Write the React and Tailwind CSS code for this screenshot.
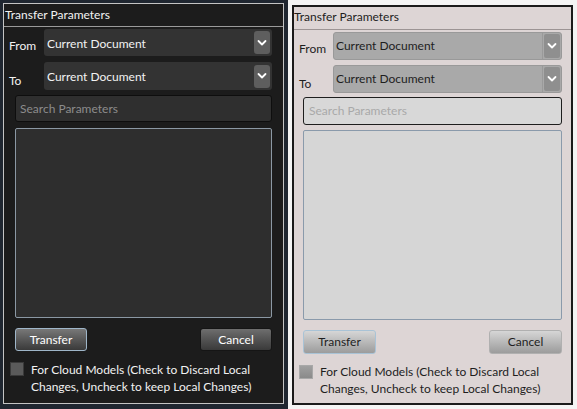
import React from 'react';

const Chevron = ({ className }) => (
  <svg viewBox="0 0 10 8" className={className} fill="none" stroke="currentColor" strokeWidth={1.8}>
    <path d="M1.5 2l3.5 3.5L8.5 2" strokeLinecap="round" strokeLinejoin="round" />
  </svg>
);

// Dark theme panel
const DarkPanel = () => (
  <div className="ml-[3px] mt-[3px] flex h-[401px] w-[281px] flex-col border border-[#c4c4c4] bg-[#1c1c1c] text-[#f2f2f2]">
    <div className="h-[23px] border-b border-[#9a9a9a] pl-[1px] pt-[3px] leading-[16px]">Transfer Parameters</div>
    {/* From / To */}
    <div className="mt-[2px] flex items-start pl-[5px] pr-[11px]">
      <span className="w-[35px] pt-[9px] leading-[16px]">From</span>
      <div className="flex h-[27px] flex-1 items-center rounded-[3px] bg-[#333333] pl-[3px] pr-[2px]">
        <span className="flex-1 pt-[2px]">Current Document</span>
        <div className="flex h-[23px] w-[16px] items-center justify-center rounded-[3px] bg-[#5e5e5e] text-white">
          <Chevron className="h-[8px] w-[10px]" />
        </div>
      </div>
    </div>
    <div className="mt-[6px] flex items-start pl-[5px] pr-[11px]">
      <span className="w-[35px] pt-[11px] leading-[16px]">To</span>
      <div className="flex h-[28px] flex-1 items-center rounded-[3px] bg-[#333333] pl-[3px] pr-[2px]">
        <span className="flex-1 pt-[1px]">Current Document</span>
        <div className="flex h-[23px] w-[16px] items-center justify-center rounded-[3px] bg-[#5e5e5e] text-white">
          <Chevron className="h-[8px] w-[10px]" />
        </div>
      </div>
    </div>
    <div className="ml-[11px] mr-[11px] mt-[5px] flex h-[27px] items-center rounded-[3px] border border-[#0e0e0e] bg-[#2f2f2f] pl-[4px] pt-[1px] text-[#8c8c8c]">
      Search Parameters
    </div>
    <div className="ml-[11px] mr-[11px] mt-[6px] h-[190px] rounded-[2px] border border-[#8b98a4] bg-[#2e2e2e]" />
    <div className="ml-[11px] mr-[11px] mt-[10px] flex justify-between">
      <button className="h-[23px] w-[72px] rounded-[3px] border border-[#9fb6c9] bg-gradient-to-b from-[#787878] to-[#3a3a3a] text-white">Transfer</button>
      <button className="h-[23px] w-[72px] rounded-[3px] border border-[#151515] bg-gradient-to-b from-[#6e6e6e] to-[#3a3a3a] text-white">Cancel</button>
    </div>
    <div className="ml-[6px] mt-[10px] flex items-start">
      <div className="mt-[1px] h-[14px] w-[14px] border border-[#3a3a3a] bg-[#5a5a5a]" />
      <div className="ml-[7px] leading-[17px]">
        For Cloud Models (Check to Discard Local<br />Changes, Uncheck to keep Local Changes)
      </div>
    </div>
  </div>
);

// Light theme panel
const LightPanel = () => (
  <div className="ml-[4px] mt-[5px] flex h-[400px] w-[281px] flex-col border-2 border-[#1a1a1a] bg-[#ddd5d5] text-[#1e1e1e]">
    <div className="h-[23px] border-b border-[#9c9494] pt-[2px] leading-[16px]">Transfer Parameters</div>
    <div className="mt-[2px] flex items-start pl-[5px] pr-[9px]">
      <span className="w-[34px] pt-[9px] leading-[16px]">From</span>
      <div className="flex h-[28px] flex-1 items-center rounded-[3px] border border-[#999999] bg-[#a9a9a9]">
        <span className="flex-1 pl-[2px]">Current Document</span>
        <div className="flex h-full w-[19px] items-center justify-center border-l border-[#9a9a9a] p-[1px]">
          <div className="flex h-full w-full items-center justify-center rounded-[2px] bg-[#8f8f8f] text-white">
            <Chevron className="h-[8px] w-[10px]" />
          </div>
        </div>
      </div>
    </div>
    <div className="mt-[5px] flex items-start pl-[5px] pr-[9px]">
      <span className="w-[34px] pt-[11px] leading-[16px]">To</span>
      <div className="flex h-[28px] flex-1 items-center rounded-[3px] border border-[#999999] bg-[#a9a9a9]">
        <span className="flex-1 pl-[2px]">Current Document</span>
        <div className="flex h-full w-[19px] items-center justify-center border-l border-[#9a9a9a] p-[1px]">
          <div className="flex h-full w-full items-center justify-center rounded-[2px] bg-[#8f8f8f] text-white">
            <Chevron className="h-[8px] w-[10px]" />
          </div>
        </div>
      </div>
    </div>
    <div className="ml-[9px] mr-[9px] mt-[4px] flex h-[28px] items-center rounded-[3px] border border-[#1e1e1e] bg-[#d8d8d8] pl-[5px] text-[#a9a9a9]">
      Search Parameters
    </div>
    <div className="ml-[9px] mr-[9px] mt-[5px] h-[190px] rounded-[2px] border border-[#8a9aab] bg-[#d6d6d6]" />
    <div className="ml-[9px] mr-[9px] mt-[10px] flex justify-between">
      <button className="h-[24px] w-[73px] rounded-[3px] border border-[#a9c3d6] bg-gradient-to-b from-[#d6d6d6] to-[#9c9c9c] text-[#1e1e1e]">Transfer</button>
      <button className="h-[24px] w-[73px] rounded-[3px] border border-[#b0b0b0] bg-gradient-to-b from-[#d6d6d6] to-[#9c9c9c] text-[#1e1e1e]">Cancel</button>
    </div>
    <div className="ml-[5px] mt-[9px] flex items-start">
      <div className="mt-[2px] h-[14px] w-[14px] border border-[#a8a8a8] bg-gradient-to-b from-[#a0a0a0] to-[#8a8a8a]" />
      <div className="ml-[7px] leading-[17px]">
        For Cloud Models (Check to Discard Local<br />Changes, Uncheck to keep Local Changes)
      </div>
    </div>
  </div>
);

export default function App() {
  return (
    <div className="flex h-[409px] w-[577px] text-[12px] font-['Lato',sans-serif]">
      <div className="h-full w-[288px] bg-[#1f2630]">
        <DarkPanel />
      </div>
      <div className="h-full flex-1 bg-[#f4f4f4]">
        <LightPanel />
      </div>
    </div>
  );
}
